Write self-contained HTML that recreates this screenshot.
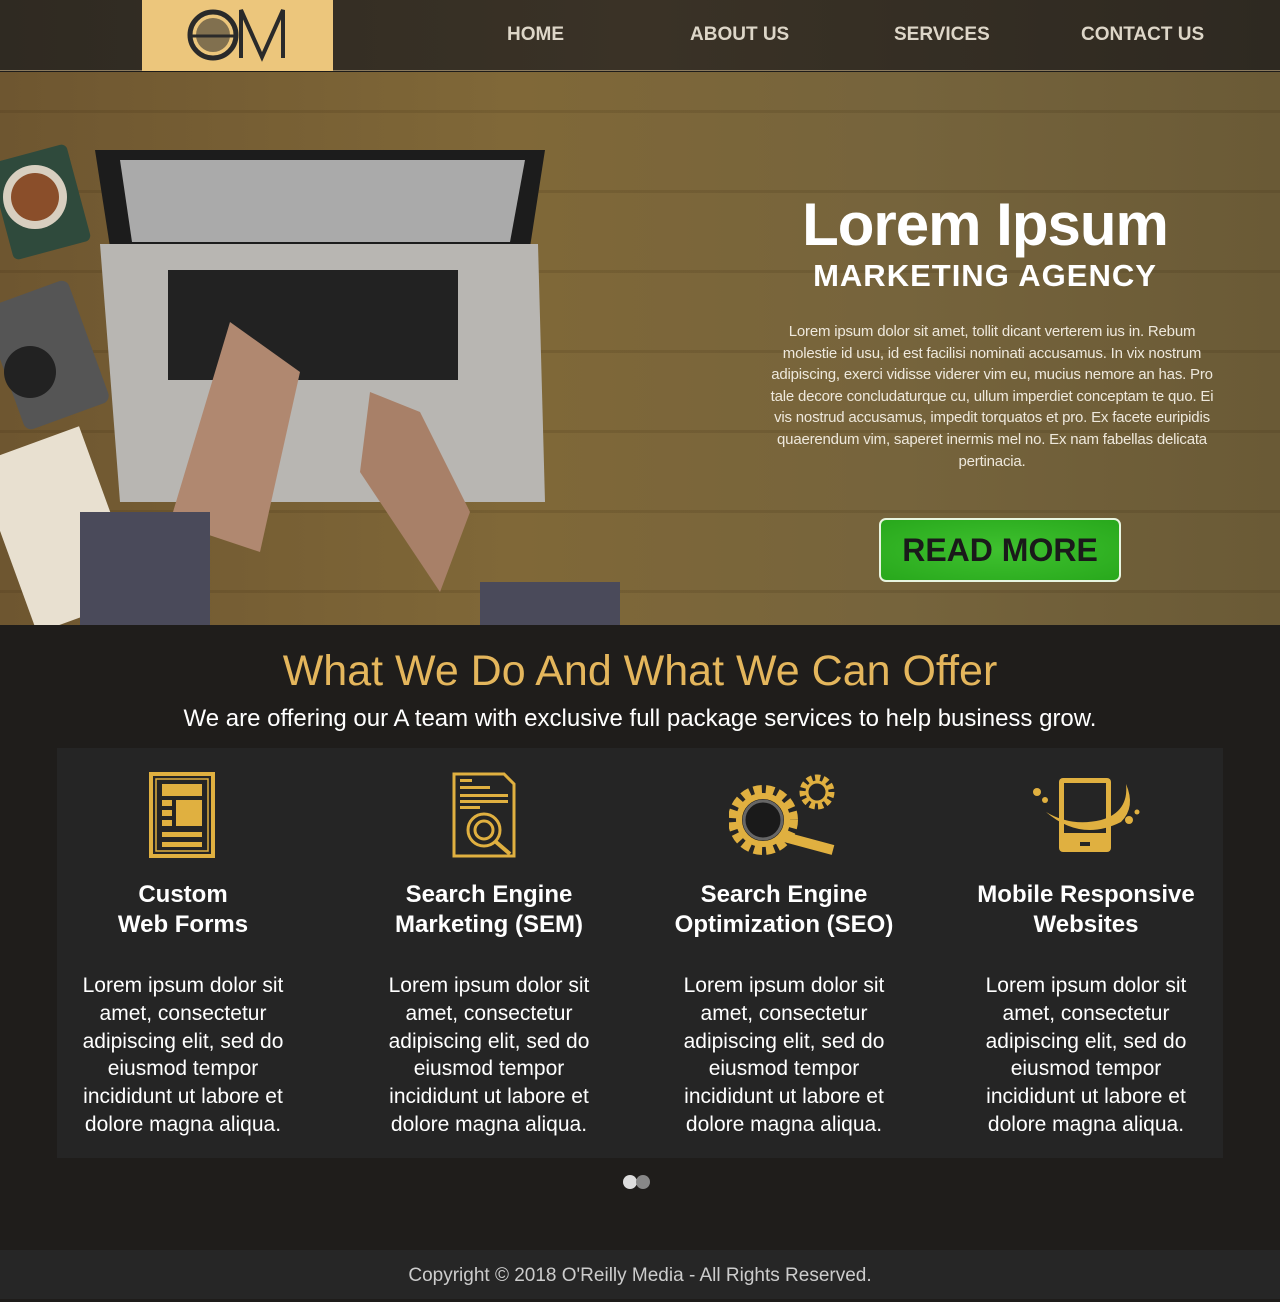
<!DOCTYPE html>
<html><head><meta charset="utf-8"><style>
*{margin:0;padding:0;box-sizing:border-box}
body{width:1280px;height:1299px;overflow:hidden;font-family:"Liberation Sans",sans-serif;background:#1e1c1a;position:relative}
.hdr{position:absolute;left:0;top:0;width:1280px;height:71px;background:linear-gradient(90deg,#2f2a22,#3a3226 50%,#2e2921);border-bottom:1px solid #8a7a5e}
.logo{position:absolute;left:142px;top:0;width:191px;height:71px;background:#ecc67c}
.nav a{position:absolute;top:24px;color:#ddd6c8;font-weight:bold;font-size:19px;text-decoration:none}
.hero{position:absolute;left:0;top:72px;width:1280px;height:553px;background:
repeating-linear-gradient(180deg,rgba(0,0,0,0) 0 38px,rgba(40,25,5,.12) 38px 41px,rgba(0,0,0,0) 41px 80px),
linear-gradient(90deg,#6e5630,#806838 40%,#76643c 70%,#6a5a36)}
.hero h1{position:absolute;left:770px;width:430px;top:118px;text-align:center;color:#fff;font-size:60px;font-weight:bold;letter-spacing:-1px}
.hero h2{position:absolute;left:770px;width:430px;top:186px;text-align:center;color:#fff;font-size:31px;font-weight:bold;letter-spacing:1px}
.hero p{position:absolute;left:768px;width:448px;top:249px;text-align:center;color:#eee8dc;font-size:15px;line-height:21.6px;letter-spacing:-.2px}
.btn{position:absolute;left:879px;top:446px;width:242px;height:64px;background:radial-gradient(#3fc12f,#28a81c);border:2px solid #e8f5e0;border-radius:7px;color:#1a1a1a;font-weight:bold;font-size:32px;text-align:center;line-height:60px}
.sec{position:absolute;left:0;top:625px;width:1280px;height:625px;background:#1f1d1b}
.sec h3{position:absolute;top:22px;width:1280px;text-align:center;color:#e4b65c;font-size:43px;font-weight:normal}
.sec .sub{position:absolute;top:80px;width:1280px;text-align:center;color:#fff;font-size:24px}
.card{position:absolute;left:57px;top:123px;width:1166px;height:410px;background:#252525}
.col{position:absolute;top:0;width:290px;text-align:center;color:#fff}
.col svg{position:absolute;top:24px}
.col .t{position:absolute;top:132px;width:100%;font-weight:bold;font-size:24px;line-height:30px}
.col .d{position:absolute;top:224px;left:25px;width:240px;font-size:21px;line-height:27.8px}
.dots{position:absolute;left:623px;top:550px}
.dots i{display:inline-block;width:14px;height:14px;border-radius:50%;background:#ddd;margin-right:0}
.ftr{position:absolute;left:0;top:1250px;width:1280px;height:49px;background:#262626;color:#ccc;text-align:center;font-size:19px;line-height:52px}
</style></head><body>
<div class="hdr">
<div class="logo"><svg width="191" height="71"><circle cx="71" cy="35" r="23" fill="none" stroke="#2a2a2a" stroke-width="5"/><circle cx="71" cy="35" r="17" fill="#2a2a2a" opacity=".55"/><line x1="50" y1="36" x2="93" y2="36" stroke="#2a2a2a" stroke-width="3"/><polyline points="99,58 99,10 120,57 141,10 141,58" fill="none" stroke="#2a2a2a" stroke-width="4"/></svg></div>
<div class="nav"><a style="left:507px">HOME</a><a style="left:690px">ABOUT US</a><a style="left:894px">SERVICES</a><a style="left:1081px">CONTACT US</a></div>
</div>
<div class="hero">
<svg width="640" height="553" style="position:absolute;left:0;top:0">
<rect x="0" y="80" width="80" height="100" rx="6" fill="#2f4a3c" transform="rotate(-15 40 130)"/><circle cx="35" cy="125" r="32" fill="#d8cfc0"/><circle cx="35" cy="125" r="24" fill="#8a4e2a"/>
<rect x="0" y="220" width="90" height="130" rx="8" fill="#555" transform="rotate(-20 40 280)"/><circle cx="30" cy="300" r="26" fill="#222"/>
<rect x="0" y="370" width="110" height="180" fill="#e8e0d0" transform="rotate(-20 50 450)"/>
<polygon points="95,78 545,78 530,175 110,175" fill="#1c1c1c"/><polygon points="120,88 525,88 510,170 132,170" fill="#aaa"/>
<polygon points="100,172 538,172 545,430 120,430" fill="#b8b6b2"/>
<rect x="168" y="198" width="290" height="110" fill="#222"/>
<path d="M170 450 L230 250 L300 300 L260 480 Z" fill="#b08870"/><path d="M370 320 L420 340 L470 440 L440 520 L360 400 Z" fill="#a88068"/>
<rect x="80" y="440" width="130" height="113" fill="#4a4a5a"/><rect x="480" y="510" width="140" height="43" fill="#4a4a5a"/>
</svg>
<h1>Lorem Ipsum</h1><h2>MARKETING AGENCY</h2>
<p>Lorem ipsum dolor sit amet, tollit dicant verterem ius in. Rebum molestie id usu, id est facilisi nominati accusamus. In vix nostrum adipiscing, exerci vidisse viderer vim eu, mucius nemore an has. Pro tale decore concludaturque cu, ullum imperdiet conceptam te quo. Ei vis nostrud accusamus, impedit torquatos et pro. Ex facete euripidis quaerendum vim, saperet inermis mel no. Ex nam fabellas delicata pertinacia.</p>
<div class="btn">READ MORE</div>
</div>
<div class="sec">
<h3>What We Do And What We Can Offer</h3>
<div class="sub">We are offering our A team with exclusive full package services to help business grow.</div>
<div class="card">
<div class="col" style="left:-19px"><svg width="70" height="90" style="left:111px"><rect x="2" y="2" width="62" height="82" fill="none" stroke="#e0b040" stroke-width="4"/><rect x="7" y="7" width="52" height="72" fill="none" stroke="#e0b040" stroke-width="1.5"/><rect x="13" y="12" width="40" height="12" fill="#e0b040"/><rect x="13" y="28" width="10" height="6" fill="#e0b040"/><rect x="13" y="38" width="10" height="6" fill="#e0b040"/><rect x="13" y="48" width="10" height="6" fill="#e0b040"/><rect x="27" y="28" width="26" height="26" fill="#e0b040"/><rect x="13" y="60" width="40" height="5" fill="#e0b040"/><rect x="13" y="70" width="40" height="5" fill="#e0b040"/></svg><div class="t">Custom<br>Web Forms</div><div class="d">Lorem ipsum dolor sit amet, consectetur adipiscing elit, sed do eiusmod tempor incididunt ut labore et dolore magna aliqua.</div></div>
<div class="col" style="left:287px"><svg width="70" height="90" style="left:108px"><path d="M2 2 H52 L62 12 V84 H2 Z" fill="none" stroke="#e0b040" stroke-width="3"/><rect x="8" y="7" width="12" height="3" fill="#e0b040"/><rect x="8" y="14" width="30" height="3" fill="#e0b040"/><rect x="8" y="22" width="48" height="3" fill="#e0b040"/><rect x="8" y="28" width="48" height="3" fill="#e0b040"/><rect x="8" y="34" width="20" height="3" fill="#e0b040"/><circle cx="32" cy="58" r="16" fill="none" stroke="#e0b040" stroke-width="3"/><circle cx="32" cy="58" r="9" fill="none" stroke="#e0b040" stroke-width="3"/><line x1="44" y1="70" x2="58" y2="82" stroke="#e0b040" stroke-width="4"/></svg><div class="t">Search Engine<br>Marketing (SEM)</div><div class="d">Lorem ipsum dolor sit amet, consectetur adipiscing elit, sed do eiusmod tempor incididunt ut labore et dolore magna aliqua.</div></div>
<div class="col" style="left:582px"><svg width="110" height="90" style="left:90px"><circle cx="34" cy="48" r="30" fill="none" stroke="#e0b040" stroke-width="10" stroke-dasharray="8 4"/><circle cx="34" cy="48" r="24" fill="#1a1a1a" stroke="#e0b040" stroke-width="6"/><circle cx="34" cy="48" r="19" fill="none" stroke="#666" stroke-width="3"/><line x1="52" y1="64" x2="104" y2="78" stroke="#e0b040" stroke-width="10"/><circle cx="88" cy="20" r="14" fill="none" stroke="#e0b040" stroke-width="7" stroke-dasharray="5 3"/><circle cx="88" cy="20" r="10" fill="none" stroke="#e0b040" stroke-width="3"/></svg><div class="t">Search Engine<br>Optimization (SEO)</div><div class="d">Lorem ipsum dolor sit amet, consectetur adipiscing elit, sed do eiusmod tempor incididunt ut labore et dolore magna aliqua.</div></div>
<div class="col" style="left:884px"><svg width="120" height="90" style="left:90px"><rect x="28" y="6" width="52" height="74" rx="4" fill="#e0b040"/><rect x="33" y="11" width="42" height="50" fill="#252525"/><rect x="49" y="70" width="10" height="4" fill="#252525"/><path d="M15 40 Q50 70 90 50 Q105 35 95 12 Q98 40 70 48 Q40 55 15 40Z" fill="#e0b040"/><circle cx="6" cy="20" r="4" fill="#e0b040"/><circle cx="14" cy="28" r="3" fill="#e0b040"/><circle cx="98" cy="48" r="4" fill="#e0b040"/><circle cx="106" cy="40" r="2.5" fill="#e0b040"/></svg><div class="t">Mobile Responsive<br>Websites</div><div class="d">Lorem ipsum dolor sit amet, consectetur adipiscing elit, sed do eiusmod tempor incididunt ut labore et dolore magna aliqua.</div></div>
</div>
<div class="dots"><i></i><i style="background:#888;margin-left:-1px"></i></div>
</div>
<div class="ftr">Copyright © 2018 O'Reilly Media - All Rights Reserved.</div>
</body></html>
